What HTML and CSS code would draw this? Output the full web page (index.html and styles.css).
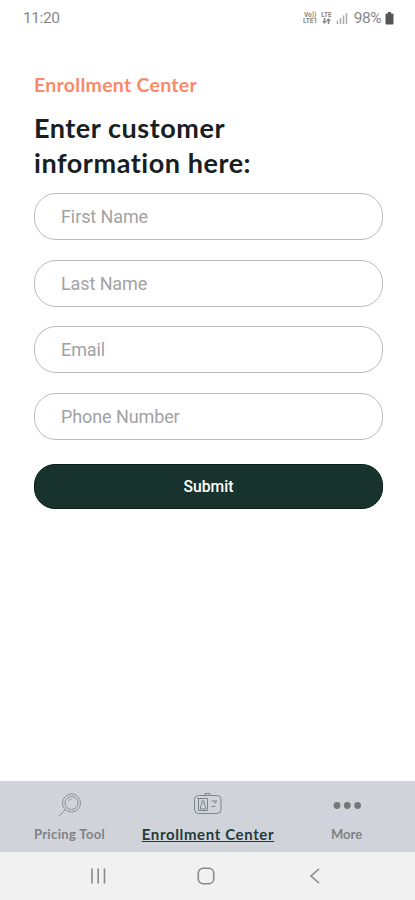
FILE: index.html
```html
<!DOCTYPE html>
<html lang="en">
<head>
<meta charset="utf-8">
<title>Enrollment Center</title>
<link rel="stylesheet" href="styles.css">
</head>
<body>
<div class="screen">
  <header class="status">
    <span class="time">11:20</span>
    <div class="indicators">
      <span class="net volte">Vo))<br>LTE1</span>
      <span class="net lte">LTE<br><svg class="arrows" width="9" height="6" viewBox="0 0 9 6"><path d="M2.500 6L0 3H1.700V0H3.300V3H5ZM6.500 0L9 3H7.300V6H5.700V3H4Z"/></svg></span>
      <svg class="signal" width="12" height="12" viewBox="0 0 12 12"><path d="M1.5 8.5V12M4.5 6V12M7.5 3.5V12M10.5 1V12"/></svg>
      <span class="percent">98%</span>
      <svg class="battery" width="9" height="13" viewBox="0 0 9 13"><path d="M3 0H6V1.5H7.5Q8.5 1.5 8.5 2.5V11.5Q8.5 12.5 7.5 12.5H1.5Q.5 12.5 .5 11.5V2.5Q.5 1.5 1.5 1.5H3Z"/></svg>
    </div>
  </header>
  <main>
    <p class="section">Enrollment Center</p>
    <h1>Enter customer<br>information here:</h1>
    <form>
      <input type="text" placeholder="First Name">
      <input type="text" placeholder="Last Name">
      <input type="email" placeholder="Email">
      <input type="tel" placeholder="Phone Number">
      <button type="button">Submit</button>
    </form>
  </main>
  <nav class="tabs">
    <div class="tab pricing">
      <svg width="26" height="26" viewBox="0 0 26 26"><circle cx="14.500" cy="11" r="9"/><circle cx="14.500" cy="11" r="6.500"/><path d="M8.500 17.500L1.500 24.500M11.500 9Q12.500 7 14.500 7"/></svg>
      <span>Pricing Tool</span>
    </div>
    <div class="tab active">
      <svg width="30" height="26" viewBox="0 0 30 26"><path d="M12 3.500V1.500H17V3.500M6.500 3.500H24Q28 3.500 28 7.500V17.500Q28 21.500 24 21.500H5.500Q1.500 21.500 1.500 17.500V7.500Q1.500 3.500 6.500 3.500M4 6.500H14.500V18.500H5.500V7M18.500 9H24L21 11.500M18.500 14.500H22.500"/><path d="M7.500 17Q7 13 9 12Q8 8.500 10 8.500Q12 8.500 11 12Q13 13 12.500 17Z"/></svg>
      <span>Enrollment Center</span>
    </div>
    <div class="tab more">
      <svg width="30" height="26" viewBox="0 0 30 26"><circle cx="5" cy="13.500" r="3.400"/><circle cx="15.300" cy="13.500" r="3.400"/><circle cx="25.600" cy="13.500" r="3.400"/></svg>
      <span>More</span>
    </div>
  </nav>
  <footer class="system">
    <svg width="16" height="18" viewBox="0 0 16 18"><path d="M2 1.500V16.500M8.200 1.500V16.500M14.500 1.500V16.500"/></svg>
    <svg width="18" height="18" viewBox="0 0 18 18"><rect x="1.300" y="1.300" width="15.400" height="15.400" rx="4.800"/></svg>
    <svg width="12" height="18" viewBox="0 0 12 18"><path d="M10 2L2 9L10 16"/></svg>
  </footer>
</div>
</body>
</html>
```
FILE: styles.css
```css
* { box-sizing: border-box; }
body { margin: 0; background: #fff; }
.screen { height: 900px; display: flex; flex-direction: column; overflow: hidden; font-family: Roboto, sans-serif; }
.status { height: 36px; padding: 0 21px 0 23px; display: flex; justify-content: space-between; align-items: center; color: #888; }
.time { font-size: 15.500px; letter-spacing: -.4px; }
.indicators { display: flex; align-items: center; }
.net { font-size: 6.500px; line-height: 6.500px; font-weight: 700; text-align: center; }
.volte { margin-right: 4px; }
.lte { margin-right: 4px; }
.arrows { display: block; margin: 0 auto; fill: #888; }
.signal { margin-right: 6px; fill: none; stroke: #aaa; stroke-width: 1.500; }
.percent { font-size: 15.500px; margin-right: 4px; letter-spacing: -.5px; }
.battery { fill: #555; }
main { flex: 1; padding: 37px 32px 0 34px; }
.section { margin: 0 0 14px; font: 700 19.500px/24px Lato, sans-serif; letter-spacing: .28px; color: #f88969; white-space: nowrap; }
h1 { margin: 0 0 13px; font: 700 27px/34.500px Lato, sans-serif; letter-spacing: .55px; color: #17201f; white-space: nowrap; }
form { display: flex; flex-direction: column; }
input { width: 349px; height: 47px; margin: 0 0 19.600px; padding: 0 26px; border: 1px solid #bbb; border-radius: 22px; background: #fff; font: 18px Roboto, sans-serif; letter-spacing: -.1px; }
input::placeholder { color: #a2a2a2; opacity: 1; }
button { width: 349px; height: 45px; margin-top: 4.600px; padding: 0; border: 1px solid #092019; border-radius: 21px; background: #18332d; color: #fff; font: 500 15.700px Roboto, sans-serif; }
.tabs { height: 71px; background: #d0d3da; display: grid; grid-template-columns: 139px 138px 138px; }
.tab { display: flex; flex-direction: column; align-items: center; padding-top: 11px; font: 700 13px/18px Lato, sans-serif; letter-spacing: .35px; color: #808284; white-space: nowrap; }
.tab svg { margin-bottom: 7px; fill: none; stroke: #8b9194; stroke-width: 1; }
.active { color: #243b36; font-size: 15px; letter-spacing: .63px; }
.active svg { stroke: #7c878a; }
.active span { text-decoration: underline; text-decoration-thickness: 1px; text-underline-offset: 1px; }
.more { padding-left: 1px; letter-spacing: 0; }
.more svg { fill: #777; stroke: none; }
.system { height: 48px; background: #f1f1f1; display: flex; align-items: center; padding-left: 90px; }
.system svg { fill: none; stroke: #8a8a8a; stroke-width: 1.600; }
.system svg + svg { margin-left: 91px; }
.system svg:last-child { margin-left: 94px; }
```
